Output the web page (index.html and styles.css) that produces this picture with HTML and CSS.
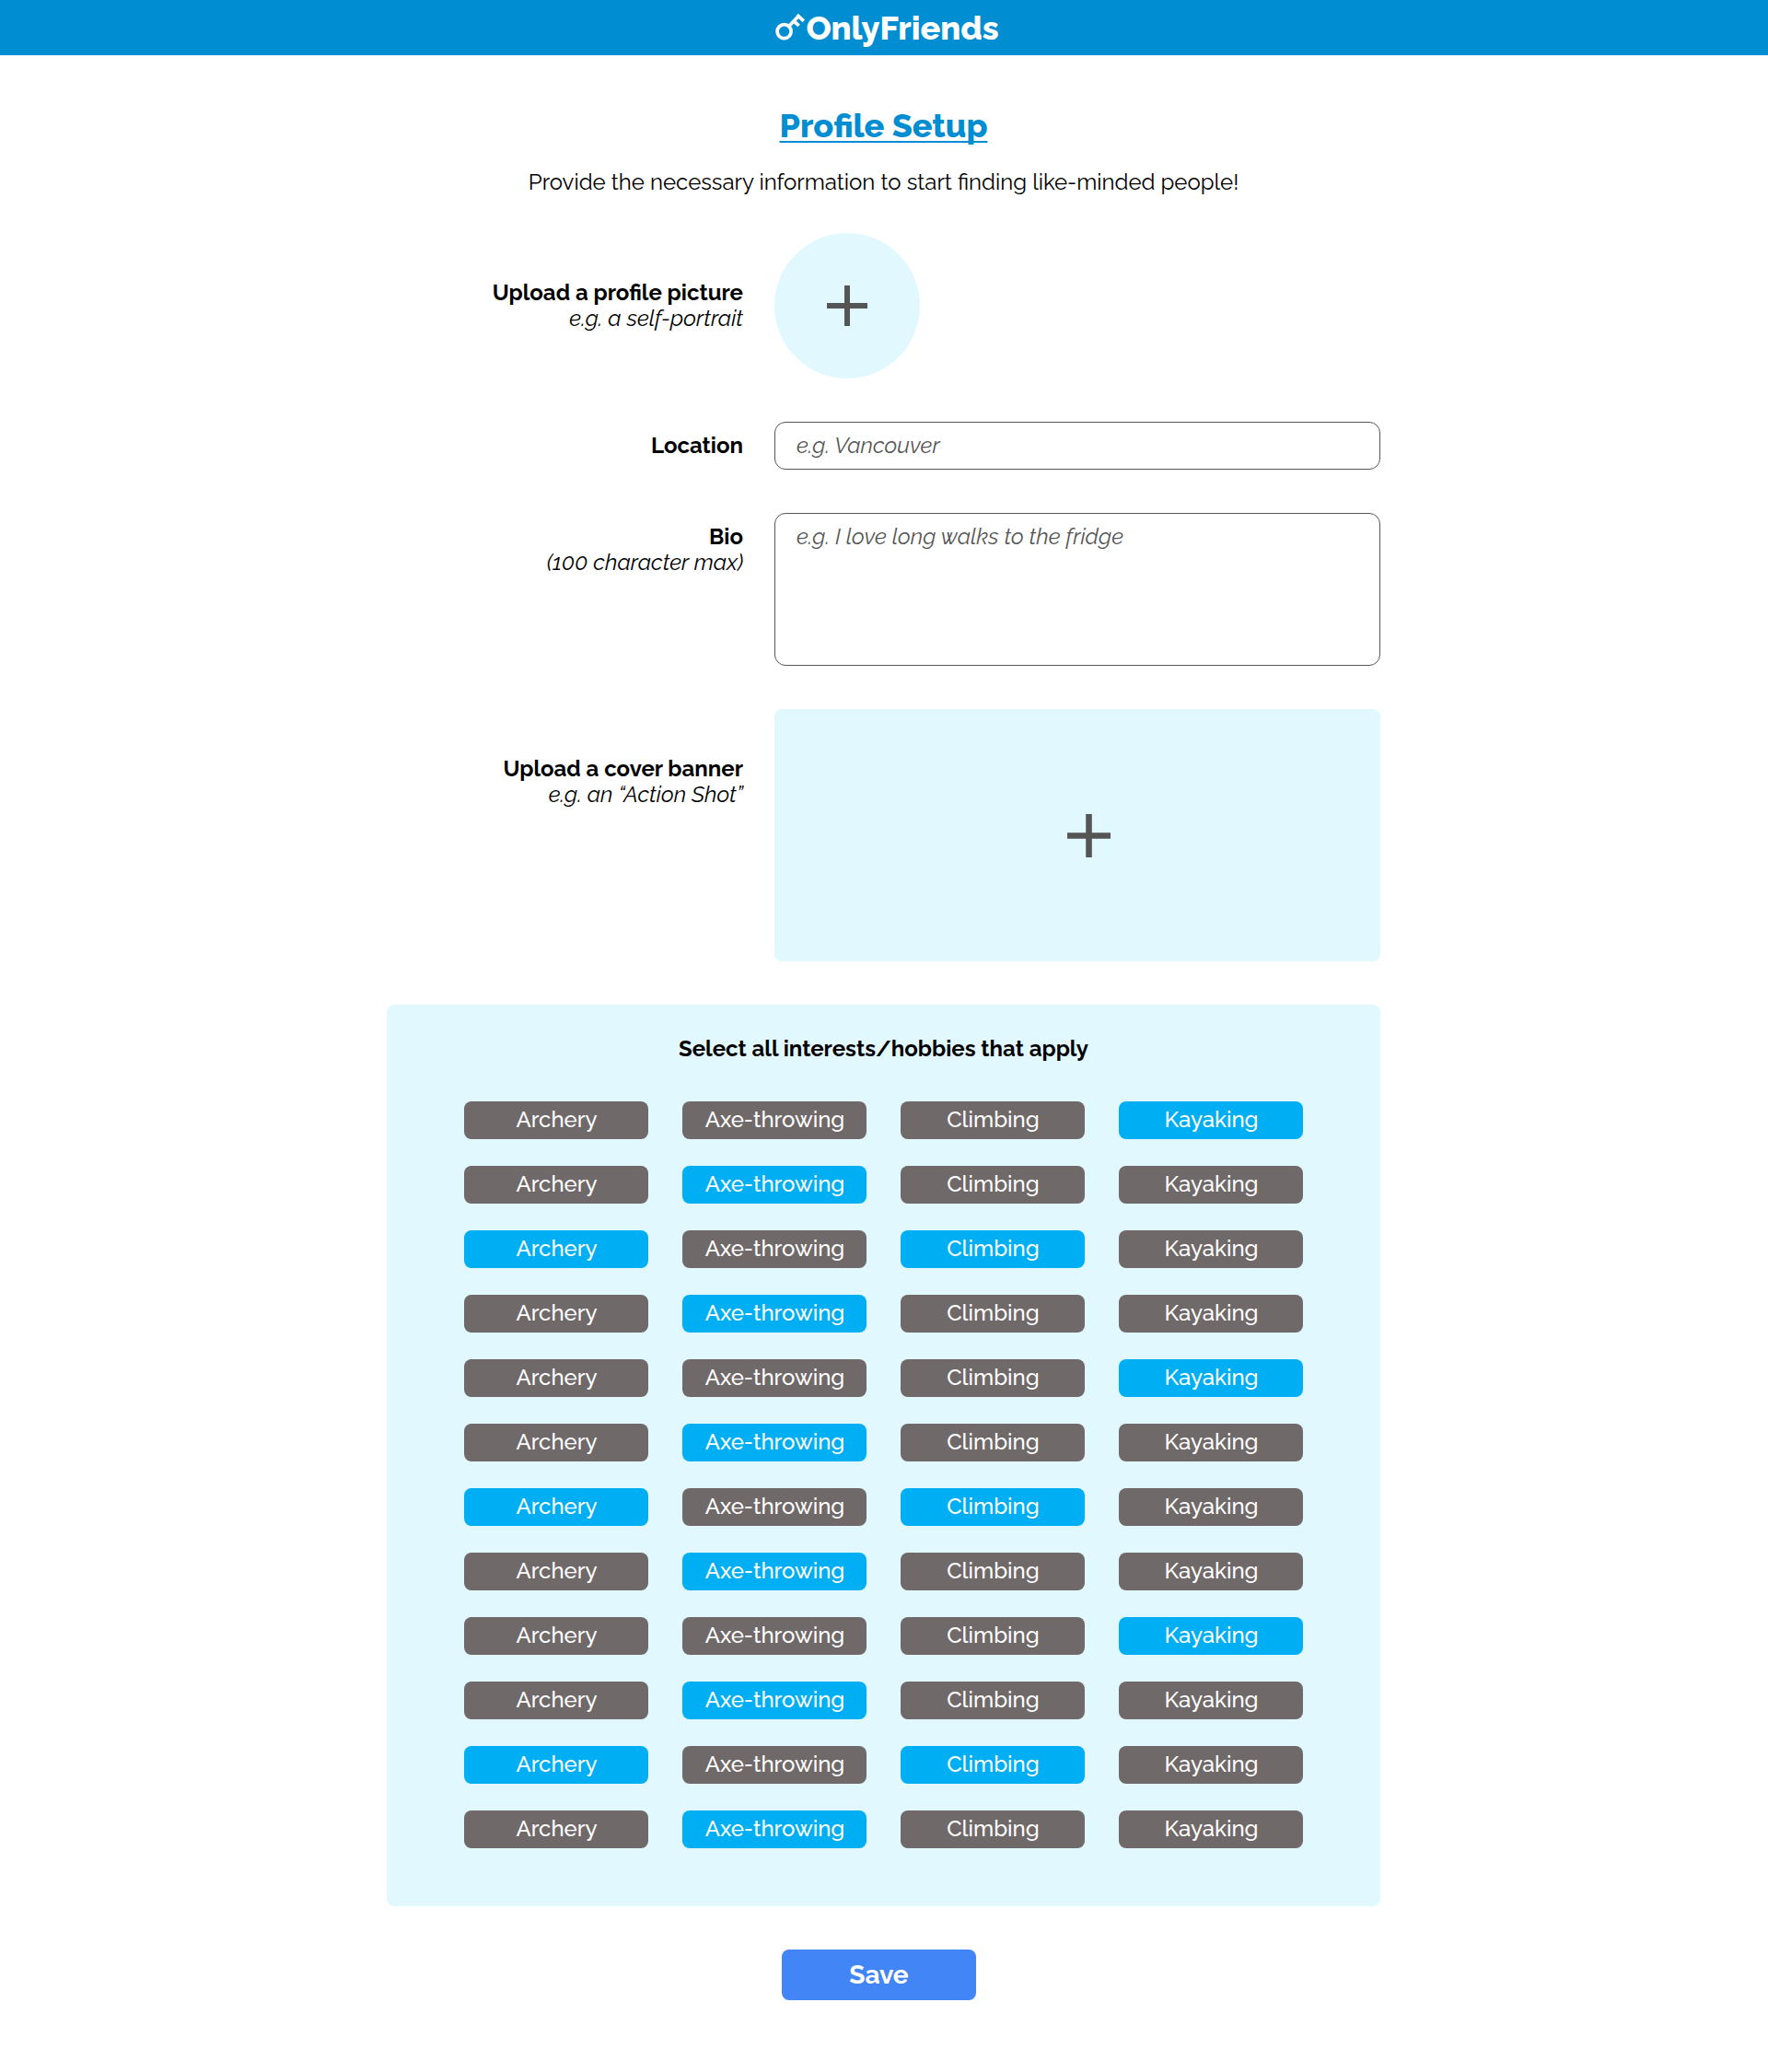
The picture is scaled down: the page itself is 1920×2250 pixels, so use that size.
FILE: index.html
```html
<!DOCTYPE html>
<html lang="en">
<head>
<meta charset="utf-8">
<title>OnlyFriends – Profile Setup</title>
<link rel="stylesheet" href="styles.css">
</head>
<body>
<header class="topbar">
  <svg class="logo-key" width="36" height="34" viewBox="0 0 36 34" fill="none" stroke="#fff" stroke-width="3.7">
    <circle cx="12.6" cy="22.2" r="7.5"/>
    <path d="M17.8 16.4 28.6 5M26.6 4 33.8 10.9M22 10 28.6 15.8"/>
  </svg>
  <span class="logo-name">OnlyFriends</span>
</header>
<main class="page">
  <h1 class="title">Profile Setup</h1>
  <p class="subtitle">Provide the necessary information to start finding like-minded people!</p>
  <form class="form">
    <div class="row">
      <div class="label label-tall"><b>Upload a profile picture</b><i>e.g. a self-portrait</i></div>
      <button type="button" class="upload avatar" aria-label="Add profile picture">
        <svg width="44" height="44" viewBox="0 0 44 44"><path d="M22 0v44M0 22h44" stroke="#555" stroke-width="6"/></svg>
      </button>
    </div>
    <div class="row">
      <div class="label"><b>Location</b></div>
      <input class="field location" type="text" placeholder="e.g. Vancouver">
    </div>
    <div class="row">
      <div class="label"><b>Bio</b><i>(100 character max)</i></div>
      <textarea class="field bio" maxlength="100" placeholder="e.g. I love long walks to the fridge"></textarea>
    </div>
    <div class="row">
      <div class="label label-tall"><b>Upload a cover banner</b><i>e.g. an “Action Shot”</i></div>
      <button type="button" class="upload banner" aria-label="Add cover banner">
        <svg width="47" height="47" viewBox="0 0 47 47"><path d="M23.5 0v47M0 23.5h47" stroke="#555" stroke-width="6.6"/></svg>
      </button>
    </div>
    <section class="interests">
      <h2 class="interests-title">Select all interests/hobbies that apply</h2>
      <div class="chips" id="chips"></div>
    </section>
    <button type="button" class="save">Save</button>
  </form>
</main>
<script src="chips.js"></script>
</body>
</html>
```
FILE: styles.css
```css
* { box-sizing: border-box; }

body {
  margin: 0;
  background: #fff;
  color: #000;
  font: 400 24px/28px Raleway, Lato, sans-serif;
}

button, input, textarea { font: inherit; }

.topbar {
  display: flex;
  justify-content: center;
  height: 60px;
  padding: 8px 0 0 4px;
  background: #008dd2;
  color: #fff;
}

.logo-key { margin-top: 4px; }

.logo-name { font-size: 36px; font-weight: 800; line-height: 44px; }

.page {
  width: 1080px;
  margin: 0 auto;
  padding: 55px 1px 0 0;
}

.title {
  margin: 0 0 27px;
  color: #008dd2;
  font-size: 36px;
  font-weight: 800;
  line-height: 42px;
  text-align: center;
  text-decoration: underline 2px;
  text-decoration-skip-ink: none;
  text-underline-offset: 4px;
}

.subtitle { margin: 0 0 41px; text-align: center; }

.form {
  display: flex;
  flex-direction: column;
  gap: 47px;
}

.row {
  display: grid;
  grid-template-columns: 387px 658px;
  column-gap: 34px;
  align-items: start;
}

.label {
  display: flex;
  flex-direction: column;
  padding-top: 12px;
  text-align: right;
}

.label-tall { padding-top: 51px; }

.upload {
  display: flex;
  align-items: center;
  justify-content: center;
  padding: 0;
  border: 0;
  background: #e2f8ff;
}

.avatar { width: 158px; height: 158px; border-radius: 50%; }

.banner { height: 274px; padding-left: 25px; border-radius: 8px; }

.field {
  display: block;
  width: 658px;
  height: 52px;
  padding: 11px 23px;
  border: 1px solid #555;
  border-radius: 12px;
  background: #fff;
  outline: 0;
}

.location { padding: 10px 23px 12px; }

.bio { height: 166px; resize: none; }

.field::placeholder { color: #555; font-style: italic; opacity: 1; }

.interests {
  height: 979px;
  padding: 34px 84px 0;
  border-radius: 8px;
  background: #e2f8ff;
}

.interests-title {
  margin: 0 0 43px;
  font-size: 24px;
  line-height: 28px;
  text-align: center;
}

.chips {
  display: grid;
  grid-template-columns: repeat(4, 200px);
  gap: 29px 37px;
}

.chip {
  height: 41px;
  padding: 0 0 1px 1px;
  border: 0;
  border-radius: 8px;
  background: #706969;
  color: #fff;
  font-weight: 500;
}

.chip-on { background: #00aff3; }

.save {
  width: 211px;
  height: 55px;
  margin-left: 429px;
  padding: 0;
  border: 0;
  border-radius: 8px;
  background: #4285f6;
  color: #fff;
  font-size: 28px;
  font-weight: 700;
}
```
FILE: chips.js
```js
const hobbies = ["Archery", "Axe-throwing", "Climbing", "Kayaking"];
// Selected columns per row; the pattern repeats every four rows.
const selected = [[3], [1], [0, 2], [1]];
const chips = document.getElementById("chips");

for (let row = 0; row < 12; row++) {
  hobbies.forEach((name, col) => {
    const chip = document.createElement("button");
    chip.type = "button";
    chip.className = selected[row % 4].includes(col) ? "chip chip-on" : "chip";
    chip.textContent = name;
    chips.append(chip);
  });
}
```
